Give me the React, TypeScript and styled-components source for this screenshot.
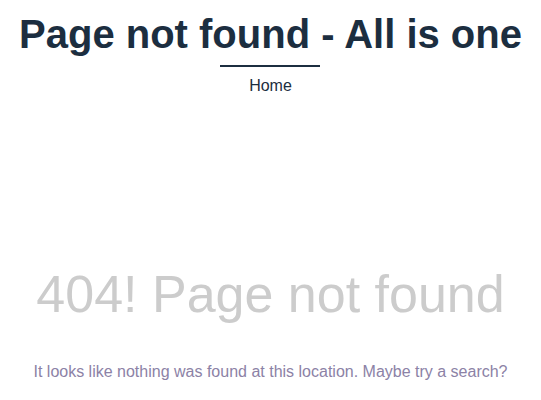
import React from 'react';
import styled, { createGlobalStyle } from 'styled-components';

const GlobalStyle = createGlobalStyle`
  html, body {
    margin: 0;
    padding: 0;
    background: #ffffff;
    font-family: "Liberation Sans", Arial, sans-serif;
  }
`;

const Page = styled.div`
  display: flex;
  flex-direction: column;
  align-items: center;
  width: 541px;
`;

const Header = styled.header`
  display: flex;
  flex-direction: column;
  align-items: center;
  padding-top: 10px;
`;

const SiteTitle = styled.h1`
  margin: 0;
  font-size: 40px;
  line-height: 48px;
  font-weight: 700;
  color: #1c2e40;
  white-space: nowrap;
`;

const Divider = styled.hr`
  width: 100px;
  height: 2px;
  margin: 7px 0 0;
  border: 0;
  background: #1c2e40;
`;

const Nav = styled.nav`
  margin-top: 9px;
`;

const NavLink = styled.a`
  font-size: 16px;
  line-height: 20px;
  color: #1c2e40;
  text-decoration: none;
`;

const Main = styled.main`
  display: flex;
  flex-direction: column;
  align-items: center;
  margin-top: 168px;
`;

const ErrorTitle = styled.h2`
  margin: 0;
  font-size: 52px;
  line-height: 60px;
  font-weight: 400;
  color: #cccccc;
  white-space: nowrap;
`;

const Message = styled.p`
  margin: 38px 0 0;
  font-size: 16px;
  line-height: 20px;
  color: #8c82a6;
  white-space: nowrap;
`;

export default function App() {
  return (
    <>
      <GlobalStyle />
      <Page>
        <Header>
          <SiteTitle>Page not found - All is one</SiteTitle>
          <Divider />
          <Nav>
            <NavLink href="#">Home</NavLink>
          </Nav>
        </Header>
        <Main>
          <ErrorTitle>404! Page not found</ErrorTitle>
          <Message>It looks like nothing was found at this location. Maybe try a search?</Message>
        </Main>
      </Page>
    </>
  );
}
